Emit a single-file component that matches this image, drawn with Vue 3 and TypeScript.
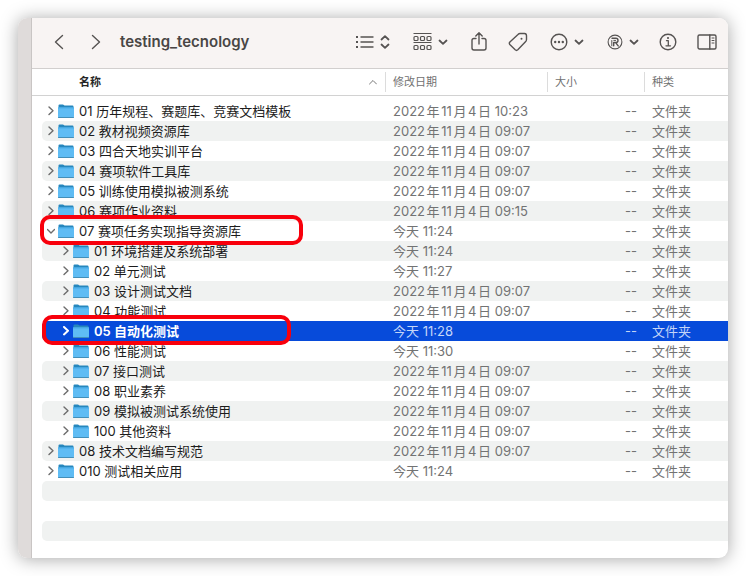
<script setup lang="ts">
import { ref } from 'vue'

interface Entry {
  name: string
  date: string
  child?: boolean
  open?: boolean
  mark?: 'wide' | 'narrow'
}

const NOV = '2022年11月4日 '

const entries: Entry[] = [
  { name: '01 历年规程、赛题库、竞赛文档模板', date: NOV + '10:23' },
  { name: '02 教材视频资源库', date: NOV + '09:07' },
  { name: '03 四合天地实训平台', date: NOV + '09:07' },
  { name: '04 赛项软件工具库', date: NOV + '09:07' },
  { name: '05 训练使用模拟被测系统', date: NOV + '09:07' },
  { name: '06 赛项作业资料', date: NOV + '09:15' },
  { name: '07 赛项任务实现指导资源库', date: '今天 11:24', open: true, mark: 'wide' },
  { name: '01 环境搭建及系统部署', date: '今天 11:24', child: true },
  { name: '02 单元测试', date: '今天 11:27', child: true },
  { name: '03 设计测试文档', date: NOV + '09:07', child: true },
  { name: '04 功能测试', date: NOV + '09:07', child: true },
  { name: '05 自动化测试', date: '今天 11:28', child: true, mark: 'narrow' },
  { name: '06 性能测试', date: '今天 11:30', child: true },
  { name: '07 接口测试', date: NOV + '09:07', child: true },
  { name: '08 职业素养', date: NOV + '09:07', child: true },
  { name: '09 模拟被测试系统使用', date: NOV + '09:07', child: true },
  { name: '100 其他资料', date: NOV + '09:07', child: true },
  { name: '08 技术文档编写规范', date: NOV + '09:07' },
  { name: '010 测试相关应用', date: '今天 11:24' },
]

const fillerRows = 3
const selected = ref(11)
</script>

<template>
  <div class="desktop">
    <div class="window">
      <aside class="edge"></aside>
      <main class="main">
        <header class="toolbar">
          <nav class="history">
            <button type="button" aria-label="后退">
              <svg width="10" height="16" viewBox="0 0 10 16"><path d="M8.5 1.5 1.5 8l7 6.5" /></svg>
            </button>
            <button type="button" aria-label="前进">
              <svg width="10" height="16" viewBox="0 0 10 16"><path d="M1.5 1.5 8.5 8l-7 6.5" /></svg>
            </button>
          </nav>
          <h1>testing_tecnology</h1>
          <div class="actions">
            <button type="button" class="wide" aria-label="显示方式">
              <svg width="18" height="18" viewBox="0 0 18 18">
                <path d="M5 4h12M5 9h12M5 14h12" />
                <path d="M0 4h2M0 9h2M0 14h2" stroke-width="2" stroke-linecap="butt" />
              </svg>
              <svg class="updown" width="10" height="16" viewBox="0 0 10 16"><path d="M1.5 5.500 5 2.200l3.500 3.300M1.500 10.500 5 13.800l3.500-3.300" /></svg>
            </button>
            <button type="button" class="wide" aria-label="分组">
              <svg width="19" height="18" viewBox="0 0 19 18">
                <path d="M.5.500h18M.5 9.500h18" stroke-linecap="butt" stroke-width="1.200" />
                <g stroke-width="1.200">
                  <rect x="1" y="3.500" width="4" height="4" rx="1" /><rect x="7.500" y="3.500" width="4" height="4" rx="1" /><rect x="14" y="3.500" width="4" height="4" rx="1" />
                  <rect x="1" y="12.500" width="4" height="4" rx="1" /><rect x="7.500" y="12.500" width="4" height="4" rx="1" /><rect x="14" y="12.500" width="4" height="4" rx="1" />
                </g>
              </svg>
              <svg class="caret" width="10" height="8" viewBox="0 0 10 8"><path d="M1.500 2.500 5 5.800l3.500-3.300" /></svg>
            </button>
            <button type="button" aria-label="共享">
              <svg width="18" height="20" viewBox="0 0 18 20">
                <path d="M6 6.500H4Q2 6.500 2 8.500v7.500q0 2 2 2h10q2 0 2-2V8.500q0-2-2-2h-2M9 12V1M5.800 4 9 .8l3.200 3.200" />
              </svg>
            </button>
            <button type="button" class="tag" aria-label="标签">
              <svg width="20" height="20" viewBox="0 0 20 20">
                <path d="M12 1.500 16.500 1.500Q18.500 1.500 18.500 3.800L18.500 7.500Q18.500 8.700 17.700 9.600L9.800 17.800Q8.500 19 7.200 17.800L1.800 12.500Q.8 11.200 1.900 10L10 2.400Q10.900 1.500 12 1.500Z" />
                <circle cx="13.500" cy="6.800" r="1" fill="currentColor" stroke="none" />
              </svg>
            </button>
            <button type="button" class="wide" aria-label="更多">
              <svg width="18" height="18" viewBox="0 0 18 18">
                <circle cx="9" cy="9" r="7.800" />
                <g fill="currentColor" stroke="none"><circle cx="5.200" cy="9" r="1.200" /><circle cx="9" cy="9" r="1.200" /><circle cx="12.800" cy="9" r="1.200" /></g>
              </svg>
              <svg class="caret" width="10" height="8" viewBox="0 0 10 8"><path d="M1.500 2.500 5 5.800l3.500-3.300" /></svg>
            </button>
            <button type="button" aria-label="扩展">
              <svg width="16" height="16" viewBox="0 0 16 16">
                <circle cx="8" cy="8" r="6.900" stroke-width="1.100" />
                <path d="M5 4.300h3.800q2.200 0 2.200 2.100T8.800 8.500H6.700v3.300M8.600 8.600l2.600 3.300" stroke-width="1.400" />
                <path d="M6.800 6.400h1.800M4.800 6.500v5.300" stroke-width="1" />
              </svg>
              <svg class="caret" width="10" height="8" viewBox="0 0 10 8"><path d="M1.500 2.500 5 5.800l3.500-3.300" /></svg>
            </button>
            <button type="button" aria-label="简介">
              <svg width="18" height="18" viewBox="0 0 18 18">
                <circle cx="9" cy="9" r="7.800" />
                <path d="M7.500 7.700h1.800v5M7 12.800h4.500" stroke-width="1.300" />
                <circle cx="9" cy="5" r="1.100" fill="currentColor" stroke="none" />
              </svg>
            </button>
            <button type="button" aria-label="预览">
              <svg width="20" height="18" viewBox="0 0 20 18">
                <rect x="1" y="2" width="18" height="14" rx="1.500" />
                <path d="M12.800 2v14" />
                <path d="M15 5h2M15 7.500h2M15 10h2" stroke-width="1" />
              </svg>
            </button>
          </div>
        </header>

        <table>
          <colgroup>
            <col />
            <col class="col-date" />
            <col class="col-size" />
            <col class="col-kind" />
          </colgroup>
          <thead>
            <tr>
              <th scope="col" class="sorted">
                <div class="heading">
                  名称
                  <svg width="8" height="6" viewBox="0 0 8 6"><path d="M.5 5 4 1.500 7.500 5" /></svg>
                </div>
              </th>
              <th scope="col"><div class="heading">修改日期</div></th>
              <th scope="col"><div class="heading">大小</div></th>
              <th scope="col"><div class="heading">种类</div></th>
            </tr>
          </thead>
          <tbody>
            <tr
              v-for="(entry, i) in entries"
              :key="i"
              :class="{ selected: selected === i }"
              @click="selected = i"
            >
              <td>
                <div class="name" :class="{ child: entry.child }">
                  <svg class="disclosure" width="8" height="10" viewBox="0 0 8 10">
                    <path :d="entry.open ? 'M.5 3.500 4 7 7.500 3.500' : 'M2 1l4 3.700-4 3.700'" />
                  </svg>
                  <svg class="folder" width="16" height="14" viewBox="0 0 16 14">
                    <path d="M.5 1.500Q.5.500 1.500.500H5l1.500 1h8q1 0 1 1V5H.5Z" fill="#2687bd" />
                    <path d="M0 3.500h16V12.500q0 1-1 1H1q-1 0-1-1Z" fill="#5fbcf4" />
                    <path d="M0 3.500h16v1H0Z" fill="#4bade8" />
                    <path d="M.5 13.500h15" stroke="#438fb9" stroke-width="1" />
                  </svg>
                  <span class="label">{{ entry.name }}</span>
                  <span v-if="entry.mark" class="mark" :class="entry.mark"></span>
                </div>
              </td>
              <td>{{ entry.date }}</td>
              <td class="size">--</td>
              <td>文件夹</td>
            </tr>
            <tr v-for="n in fillerRows" :key="'filler' + n" aria-hidden="true">
              <td><div class="name"></div></td>
              <td></td>
              <td></td>
              <td></td>
            </tr>
          </tbody>
        </table>
      </main>
    </div>
  </div>
</template>

<style>
body {
  margin: 0;
  background: #fff;
}
</style>

<style scoped>
.desktop {
  box-sizing: border-box;
  min-height: 100vh;
  padding: 18px;
  display: flex;
  font-family: Inter, "Noto Sans CJK SC", sans-serif;
  font-size: 13px;
  text-autospace: normal;
}

.window {
  flex: 1;
  display: flex;
  border-radius: 9px;
  overflow: hidden;
  background: #fff;
  box-shadow: 0 1px 18px rgba(0, 0, 0, 0.35);
}

.edge {
  flex: none;
  width: 13px;
  background: #dfdbda;
  border-right: 1px solid #c9c5c4;
}

.main {
  flex: 1;
  min-width: 0;
  padding-bottom: 17px;
}

.toolbar {
  height: 48px;
  padding: 0 11px 2px 22px;
  display: flex;
  align-items: center;
  background: #f8f4f3;
  border-bottom: 1px solid #d2cfce;
  color: #565352;
}

.toolbar button {
  display: flex;
  align-items: center;
  padding: 0;
  border: 0;
  background: none;
  color: inherit;
}

svg {
  flex: none;
  display: block;
  fill: none;
  stroke: currentColor;
  stroke-width: 1.4;
  stroke-linecap: round;
  stroke-linejoin: round;
}

.history {
  display: flex;
  gap: 27px;
}

h1 {
  margin: 0 0 0 19px;
  font-size: 15px;
  line-height: 20px;
  font-weight: 600;
  color: #494645;
}

.actions {
  margin-left: auto;
  display: flex;
  align-items: center;
  gap: 20px;
}

.actions .wide {
  width: 37px;
}

.actions .tag {
  width: 22px;
}

.updown {
  margin-left: 6px;
  stroke-width: 1.8;
}

.caret {
  margin-left: 6px;
  stroke-width: 1.8;
}

table {
  width: 100%;
  table-layout: fixed;
  border-collapse: separate;
  border-spacing: 0;
}

.col-date {
  width: 162px;
}

.col-size {
  width: 97px;
}

.col-kind {
  width: 84px;
}

th,
td {
  padding: 0;
  text-align: left;
}

th {
  height: 26px;
  border-bottom: 1px solid #d2d2d2;
  font-size: 11px;
  font-weight: 400;
  color: #717171;
}

.heading {
  height: 20px;
  line-height: 20px;
  padding-left: 7px;
  border-left: 1px solid #dcdcdc;
}

.sorted .heading {
  display: flex;
  align-items: center;
  justify-content: space-between;
  padding: 0 8px 0 47px;
  border-left: 0;
  font-weight: 700;
  color: #262626;
}

.sorted svg {
  color: #777;
  stroke-width: 1;
}

tbody::before {
  content: "";
  display: block;
  height: 5px;
}

td {
  height: 20px;
  line-height: 20px;
  padding-left: 8px;
  white-space: nowrap;
  color: #727373;
}

td:first-child {
  padding-left: 10px;
}

.size {
  padding: 0 7px 0 0;
  text-align: right;
}

.name {
  position: relative;
  height: 20px;
  padding-left: 5px;
  display: flex;
  align-items: center;
  border-radius: 5px 0 0 5px;
  color: #1c1c1c;
}

.name.child {
  padding-left: 20px;
}

tr:nth-child(even) td:not(:first-child),
tr:nth-child(even) .name {
  background: #f0f2f1;
}

tr.selected td:not(:first-child),
tr.selected .name {
  background: #074bda;
}

tr.selected td {
  color: #c4d5f8;
}

tr.selected .name {
  color: #fff;
  font-weight: 600;
}

.disclosure {
  color: #6c6c6c;
}

.selected .disclosure {
  color: #fff;
  stroke-width: 2;
}

.folder {
  margin: 0 5px 0 3px;
  stroke: none;
}

.mark {
  position: absolute;
  z-index: 1;
  box-sizing: border-box;
  top: -6px;
  height: 30px;
  border: 4px solid #f8000c;
  border-radius: 10px;
  pointer-events: none;
}

.mark.wide {
  left: -2px;
  width: 263px;
}

.mark.narrow {
  left: 0;
  width: 249px;
}
</style>
